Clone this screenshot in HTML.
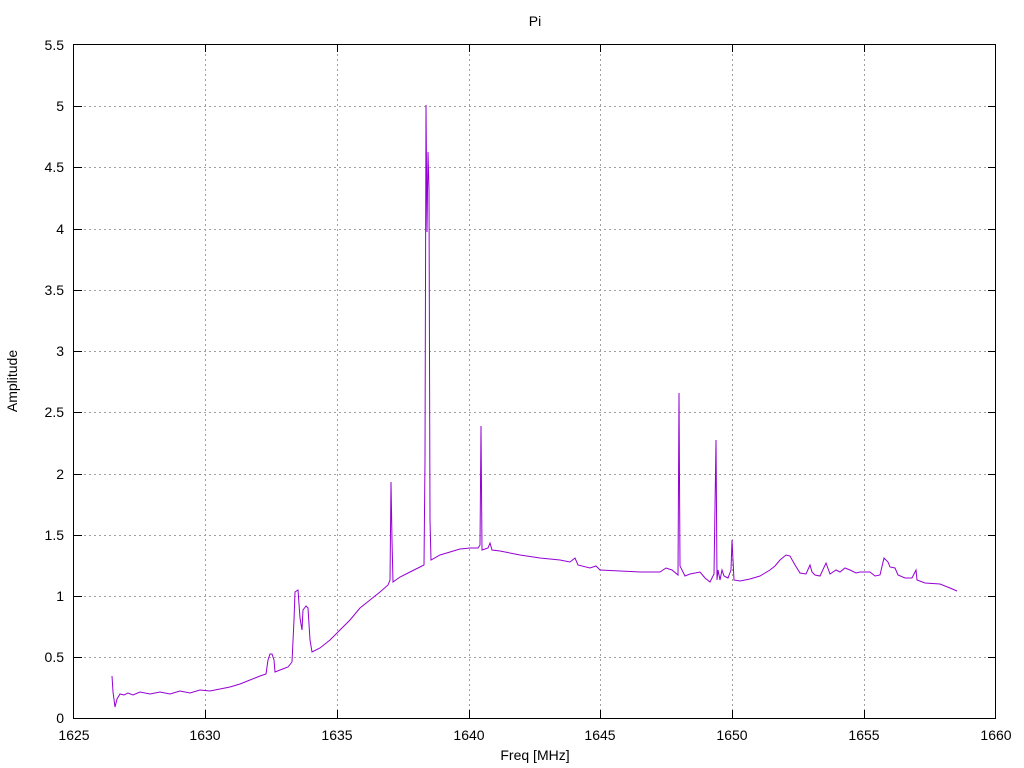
<!DOCTYPE html>
<html><head><style>body{margin:0;background:#fff}svg{display:block}text{font-family:"Liberation Sans",sans-serif;font-size:14px;fill:#000}</style></head><body>
<svg width="1024" height="768" viewBox="0 0 1024 768">
<g stroke="#a0a0a0" stroke-width="1" stroke-dasharray="2,3">
<line x1="74" x2="996" y1="657.5" y2="657.5"/><line x1="74" x2="996" y1="596.5" y2="596.5"/><line x1="74" x2="996" y1="535.5" y2="535.5"/><line x1="74" x2="996" y1="474.5" y2="474.5"/><line x1="74" x2="996" y1="412.5" y2="412.5"/><line x1="74" x2="996" y1="351.5" y2="351.5"/><line x1="74" x2="996" y1="290.5" y2="290.5"/><line x1="74" x2="996" y1="229.5" y2="229.5"/><line x1="74" x2="996" y1="167.5" y2="167.5"/><line x1="74" x2="996" y1="106.5" y2="106.5"/>
<line y1="44" y2="718" x1="205.5" x2="205.5"/><line y1="44" y2="718" x1="337.5" x2="337.5"/><line y1="44" y2="718" x1="469.5" x2="469.5"/><line y1="44" y2="718" x1="600.5" x2="600.5"/><line y1="44" y2="718" x1="732.5" x2="732.5"/><line y1="44" y2="718" x1="864.5" x2="864.5"/>
</g>
<rect x="73.5" y="44.5" width="922" height="674" fill="none" stroke="#000"/>
<g stroke="#000">
<path d="M74 657.5h8M74 596.5h8M74 535.5h8M74 474.5h8M74 412.5h8M74 351.5h8M74 290.5h8M74 229.5h8M74 167.5h8M74 106.5h8M996 657.5h-8M996 596.5h-8M996 535.5h-8M996 474.5h-8M996 412.5h-8M996 351.5h-8M996 290.5h-8M996 229.5h-8M996 167.5h-8M996 106.5h-8M205.5 718v-8M337.5 718v-8M469.5 718v-8M600.5 718v-8M732.5 718v-8M864.5 718v-8M205.5 44v8M337.5 44v8M469.5 44v8M600.5 44v8M732.5 44v8M864.5 44v8"/>
</g>
<g text-anchor="end">
<text x="64" y="723">0</text><text x="64" y="662">0.5</text><text x="64" y="601">1</text><text x="64" y="540">1.5</text><text x="64" y="479">2</text><text x="64" y="417">2.5</text><text x="64" y="356">3</text><text x="64" y="295">3.5</text><text x="64" y="234">4</text><text x="64" y="172">4.5</text><text x="64" y="111">5</text><text x="64" y="50">5.5</text>
</g>
<g text-anchor="middle">
<text x="74" y="740">1625</text><text x="205" y="740">1630</text><text x="337" y="740">1635</text><text x="469" y="740">1640</text><text x="600" y="740">1645</text><text x="732" y="740">1650</text><text x="864" y="740">1655</text><text x="996" y="740">1660</text>
<text x="535" y="760">Freq [MHz]</text><text x="535" y="26">Pi</text>
<text transform="translate(17,381) rotate(-90)">Amplitude</text>
</g>
<polyline fill="none" stroke="#9400d3" stroke-width="1" points="112,676 113,692 115,707 117,699 120,694 124,695 128,693 133,695 140,692 150,694 160,692 170,694 180,691 190,693 200,690 210,691 220,689 230,687 240,684 250,680 260,676 266,674 268,660 270,654 272,654 274,660 275,672 280,670 288,667 292,662 294,620 295,592 298,590 300,618 302,630 303,610 306,606 308,608 310,640 312,652 320,648 330,640 340,630 350,620 360,608 370,600 380,592 388,585 390,580 391,482 392,540 393,582 400,577 410,572 420,567 424,565 425,460 426,105 427,232 428,152 429,190 430,520 431,560 440,555 450,552 460,549 470,548 478,548 480,545 481,426 482,550 488,548 490,543 492,550 500,551 520,555 540,558 560,560 570,562 575,558 578,565 590,568 596,566 600,570 620,571 640,572 660,572 666,568 672,570 678,575 679,393 680,566 685,576 690,574 700,572 705,578 710,582 714,574 716,440 717,580 718,570 720,580 722,570 724,576 728,578 731,570 732,540 734,580 740,581 750,579 760,576 770,570 775,566 780,560 786,555 790,556 795,565 800,573 806,574 810,565 812,572 815,575 820,576 826,563 830,574 836,570 840,572 845,568 850,570 856,573 860,572 870,572 875,576 880,575 884,558 888,562 890,567 895,568 898,575 905,578 912,578 916,570 917,580 925,583 940,584 950,588 957,591"/>
</svg>
</body></html>
